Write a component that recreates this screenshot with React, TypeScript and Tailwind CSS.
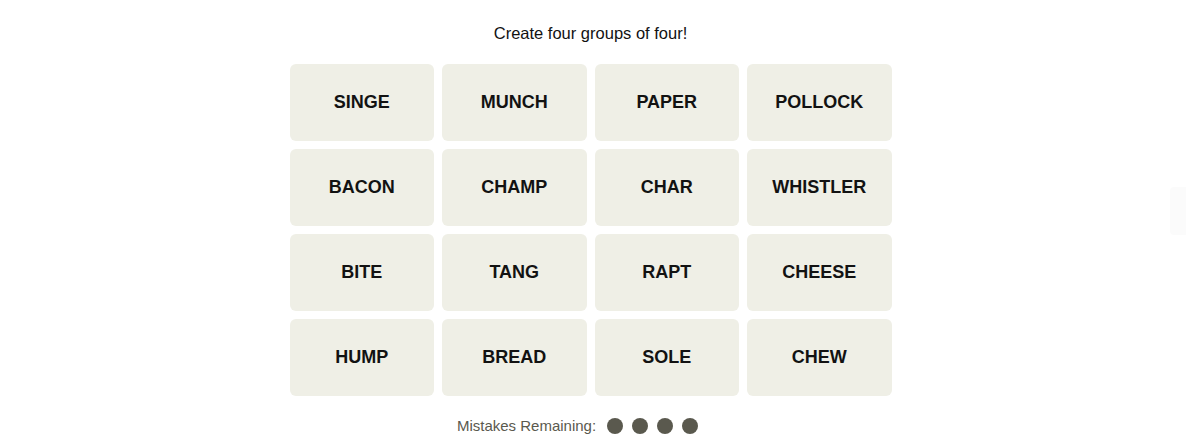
import React from "react";

const words = [
  "SINGE", "MUNCH", "PAPER", "POLLOCK",
  "BACON", "CHAMP", "CHAR", "WHISTLER",
  "BITE", "TANG", "RAPT", "CHEESE",
  "HUMP", "BREAD", "SOLE", "CHEW",
];

export default function App() {
  return (
    <div
      className="relative w-[1186px] h-[448px] bg-white overflow-hidden"
      style={{ fontFamily: '"Liberation Sans", Arial, sans-serif' }}
    >
      <div className="flex flex-col items-center pr-[5px] pt-[20px]">
        <p className="h-[24px] leading-[26px] text-[16.5px] text-[#121212]">
          Create four groups of four!
        </p>
        <div className="mt-[20px] grid w-[602px] grid-cols-4 gap-x-[8px] gap-y-[8px]">
          {words.map((w) => (
            <button
              key={w}
              className="flex h-[77px] items-center justify-center rounded-[6px] bg-[#efefe6] text-[18px] font-bold uppercase text-[#121212]"
            >
              {w}
            </button>
          ))}
        </div>
        <div className="mt-[22px] flex items-center pr-[26px]">
          <span className="text-[15px] leading-[16px] text-[#5a594e]">Mistakes Remaining:</span>
          <div className="ml-[11px] flex gap-[9px]">
            {[0, 1, 2, 3].map((i) => (
              <span key={i} className="block h-[16px] w-[16px] rounded-full bg-[#5a594e]" />
            ))}
          </div>
        </div>
      </div>
      <div className="absolute right-0 top-[187px] h-[48px] w-[16px] rounded-l-[4px] bg-[#fbfbfb]" />
    </div>
  );
}
